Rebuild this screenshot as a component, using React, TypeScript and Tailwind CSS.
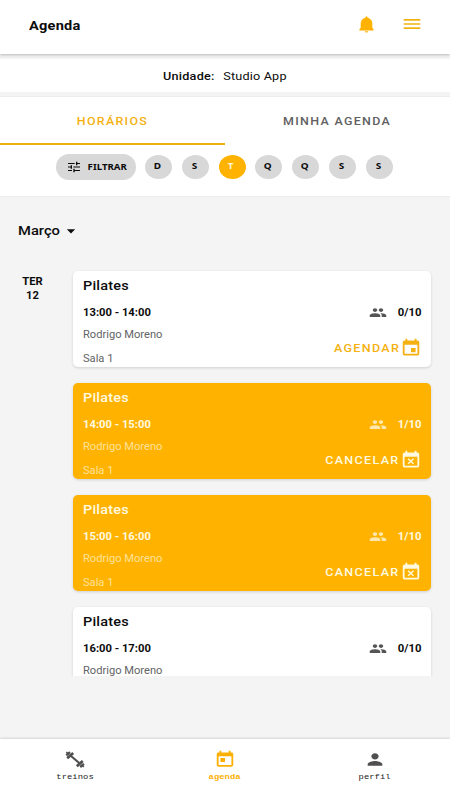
import type { ReactNode } from 'react';
import {
  MdArrowDropDown,
  MdEvent,
  MdEventBusy,
  MdMenu,
  MdPeople,
  MdPerson,
  MdToday,
  MdTune,
} from 'react-icons/md';

type Session = { time: string; count: string; booked: boolean; partial?: boolean };

const sessions: Session[] = [
  { time: '13:00 - 14:00', count: '0/10', booked: false },
  { time: '14:00 - 15:00', count: '1/10', booked: true },
  { time: '15:00 - 16:00', count: '1/10', booked: true },
  { time: '16:00 - 17:00', count: '0/10', booked: false, partial: true },
];

const days = ['D', 'S', 'T', 'Q', 'Q', 'S', 'S'];

function SessionCard({ time, count, booked, partial }: Session) {
  const muted = booked ? 'text-[#ffe19a]' : 'text-[#646464]';
  return (
    <article
      className={`flex h-24 shrink-0 justify-between rounded-[5px] pl-[9.6px] pr-[9px] shadow-[0_1px_3px_rgba(0,0,0,0.15)] ${
        booked ? 'bg-[#ffb300] text-[#fff9e0]' : 'bg-white text-[#0c0c0c]'
      }`}
    >
      <div className="flex flex-col items-start whitespace-nowrap">
        <h2 className="mt-[5px] h-5 origin-left scale-x-[1.08] text-[13.4px] font-medium leading-5 tracking-[0.2px]">
          Pilates
        </h2>
        <p className="mt-[9px] h-4 origin-left scale-x-[1.08] text-[10.4px] font-bold leading-4">{time}</p>
        <p className={`mt-[6px] h-4 origin-left scale-x-[1.08] text-[10.3px] leading-4 ${muted}`}>
          Rodrigo Moreno
        </p>
        {!partial && (
          <p className={`mt-[8px] h-4 origin-left scale-x-[1.08] text-[10.3px] leading-4 ${muted}`}>
            Sala 1
          </p>
        )}
      </div>
      <div className="flex flex-col items-end whitespace-nowrap">
        <div className="mt-[34px] flex h-4 items-center">
          <MdPeople
            preserveAspectRatio="none"
            className={`mr-[13.5px] h-[15px] w-[18px] ${booked ? 'text-[#ffe8ad]' : 'text-[#555]'}`}
          />
          <span className="origin-right scale-x-[1.1] text-[10.3px] font-bold">{count}</span>
        </div>
        {!partial && (
          <div className={`mt-[17.5px] flex h-5 items-center ${booked ? '' : 'text-[#f5b111]'}`}>
            <span className="origin-right translate-y-px scale-x-[1.1] text-[11.4px] font-medium tracking-[1.2px]">
              {booked ? 'CANCELAR' : 'AGENDAR'}
            </span>
            {booked ? (
              <MdEventBusy preserveAspectRatio="none" className="h-[20px] w-[22px]" />
            ) : (
              <MdEvent preserveAspectRatio="none" className="h-[20px] w-[22px]" />
            )}
          </div>
        )}
      </div>
    </article>
  );
}

function NavItem({ label, children, active }: { label: string; children: ReactNode; active?: boolean }) {
  return (
    <button
      className={`flex flex-1 flex-col items-center pt-[11px] ${active ? 'text-[#fbb003]' : 'text-[#505050]'}`}
    >
      {children}
      <span
        className={`mt-[2px] h-3 scale-x-[1.1] font-['Liberation_Mono',monospace] text-[8px] leading-3 tracking-[0.06px] ${
          active ? 'font-bold' : 'text-[#222]'
        }`}
      >
        {label}
      </span>
    </button>
  );
}

export default function App() {
  return (
    <div className="flex h-[800px] w-[450px] flex-col overflow-hidden bg-[#f4f4f4] font-[Roboto,sans-serif] text-[#0c0c0c]">
      <header className="z-10 flex h-[54px] shrink-0 items-center bg-white pb-[3px] pl-[29px] pr-[27px] shadow-[0_1px_3px_rgba(0,0,0,0.25)]">
        <div className="flex-1">
          <h1 className="w-fit origin-left scale-x-[1.14] text-[12.8px] font-bold tracking-[0.2px]">Agenda</h1>
        </div>
        <svg viewBox="0 0 15 17" fill="currentColor" className="mr-[27px] mt-[-3px] h-[17px] w-[15px] text-[#ffb300]">
          <path d="M7.5 .5c-.8 0-1.1.5-1.2 1.3C3.7 2.4 1.7 4.6 1.7 7.2v4.6L.4 13.3v1.2h14.2v-1.2l-1.3-1.5V7.2c0-2.6-2-4.8-4.6-5.4C8.6 1 8.3.5 7.5.5ZM5.7 15.3c.2.8.9 1.2 1.8 1.2s1.6-.4 1.8-1.2Z" />
        </svg>
        <MdMenu preserveAspectRatio="none" className="mt-[-3px] h-5 w-[22px] text-[#f2b40c]" />
      </header>

      <section className="mt-[5px] flex h-[33px] shrink-0 items-center justify-center gap-[15px] bg-white pt-[3px] text-[11.2px]">
        <span className="-translate-x-px scale-x-[1.13] font-medium tracking-[0.2px]">Unidade:</span>
        <span className="scale-x-[1.13] tracking-[0.15px]">Studio App</span>
      </section>

      <section className="mt-[5px] h-[99px] shrink-0 bg-white shadow-[0_0_1px_rgba(0,0,0,0.2)]">
        <div className="flex h-[48px] text-[11.3px] font-medium">
          <button className="flex-1 border-b-2 border-[#efae12] text-[#f5b111]">
            <span className="inline-block translate-y-[2px] scale-x-[1.1] tracking-[1.2px]">HORÁRIOS</span>
          </button>
          <button className="flex-1 text-[#606060]">
            <span className="inline-block translate-y-px scale-x-[1.1] tracking-[1.2px]">MINHA AGENDA</span>
          </button>
        </div>
        <div className="mt-[9px] flex items-center pl-[56px] font-['Noto_Sans',sans-serif] text-[9.5px] font-bold">
          <button className="mr-[9px] flex h-[26px] w-[80px] items-center justify-center gap-[6px] rounded-full bg-[#d8d8d8]">
            <MdTune preserveAspectRatio="none" className="h-[14px] w-[16px]" />
            <span className="scale-x-[1.02]">FILTRAR</span>
          </button>
          <div className="flex gap-[9.8px]">
            {days.map((day, i) => (
              <button
                key={i}
                className={`h-6 w-[27px] rounded-[50%] pb-[2px] pr-[2px] ${i === 2 ? 'bg-[#ffb300] text-[#fff6d8]' : 'bg-[#d8d8d8]'}`}
              >
                <span className="inline-block scale-x-[1.05]">{day}</span>
              </button>
            ))}
          </div>
        </div>
      </section>

      <button className="mt-[25px] flex h-5 shrink-0 items-center pl-[18px] text-[13.4px] font-medium">
        <span className="mr-[5px] origin-left scale-x-[1.1]">Março</span>
        <MdArrowDropDown preserveAspectRatio="none" className="h-[20px] w-[20px]" />
      </button>

      <main className="mt-[20px] flex h-[415px] shrink-0 overflow-hidden pt-[9.5px]">
        <div className="w-[73.4px] shrink-0 pr-[8.5px] pt-[4px] text-center text-[10.2px] font-bold leading-[14.5px]">
          <div className="scale-x-[1.1]">TER</div>
          <div className="scale-x-[1.1]">12</div>
        </div>
        <div className="flex w-[357.6px] flex-col gap-4">
          {sessions.map((session) => (
            <SessionCard key={session.time} {...session} />
          ))}
        </div>
      </main>

      <nav className="mt-auto flex h-[61px] shrink-0 bg-white shadow-[0_-1px_2px_rgba(0,0,0,0.12)]">
        <NavItem label="treinos">
          <svg viewBox="0 0 22 19" className="h-[19px] w-[22px]" fill="none" stroke="currentColor">
            <path d="M7 6 15.2 13" strokeWidth="2.2" />
            <path d="M3.2 8.2 9.2 3M12.8 16.2 18.8 11" strokeWidth="2.8" />
            <path d="M2.3 5.3 6 2.1M16.2 17 19.9 13.8" strokeWidth="2.4" />
            <path d="M2.3 2.2 4 3.7M18.1 15.3 19.8 16.8" strokeWidth="1.7" />
          </svg>
        </NavItem>
        <NavItem label="agenda" active>
          <MdToday preserveAspectRatio="none" className="h-[19px] w-[22px]" />
        </NavItem>
        <NavItem label="perfil">
          <MdPerson preserveAspectRatio="none" className="h-[19px] w-[22px]" />
        </NavItem>
      </nav>
    </div>
  );
}
